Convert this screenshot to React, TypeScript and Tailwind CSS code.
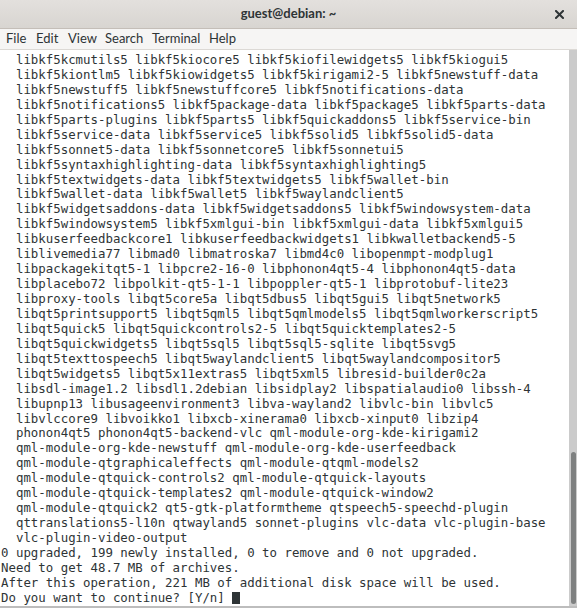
import React from "react";

const lines = [
  "  libkf5kcmutils5 libkf5kiocore5 libkf5kiofilewidgets5 libkf5kiogui5",
  "  libkf5kiontlm5 libkf5kiowidgets5 libkf5kirigami2-5 libkf5newstuff-data",
  "  libkf5newstuff5 libkf5newstuffcore5 libkf5notifications-data",
  "  libkf5notifications5 libkf5package-data libkf5package5 libkf5parts-data",
  "  libkf5parts-plugins libkf5parts5 libkf5quickaddons5 libkf5service-bin",
  "  libkf5service-data libkf5service5 libkf5solid5 libkf5solid5-data",
  "  libkf5sonnet5-data libkf5sonnetcore5 libkf5sonnetui5",
  "  libkf5syntaxhighlighting-data libkf5syntaxhighlighting5",
  "  libkf5textwidgets-data libkf5textwidgets5 libkf5wallet-bin",
  "  libkf5wallet-data libkf5wallet5 libkf5waylandclient5",
  "  libkf5widgetsaddons-data libkf5widgetsaddons5 libkf5windowsystem-data",
  "  libkf5windowsystem5 libkf5xmlgui-bin libkf5xmlgui-data libkf5xmlgui5",
  "  libkuserfeedbackcore1 libkuserfeedbackwidgets1 libkwalletbackend5-5",
  "  liblivemedia77 libmad0 libmatroska7 libmd4c0 libopenmpt-modplug1",
  "  libpackagekitqt5-1 libpcre2-16-0 libphonon4qt5-4 libphonon4qt5-data",
  "  libplacebo72 libpolkit-qt5-1-1 libpoppler-qt5-1 libprotobuf-lite23",
  "  libproxy-tools libqt5core5a libqt5dbus5 libqt5gui5 libqt5network5",
  "  libqt5printsupport5 libqt5qml5 libqt5qmlmodels5 libqt5qmlworkerscript5",
  "  libqt5quick5 libqt5quickcontrols2-5 libqt5quicktemplates2-5",
  "  libqt5quickwidgets5 libqt5sql5 libqt5sql5-sqlite libqt5svg5",
  "  libqt5texttospeech5 libqt5waylandclient5 libqt5waylandcompositor5",
  "  libqt5widgets5 libqt5x11extras5 libqt5xml5 libresid-builder0c2a",
  "  libsdl-image1.2 libsdl1.2debian libsidplay2 libspatialaudio0 libssh-4",
  "  libupnp13 libusageenvironment3 libva-wayland2 libvlc-bin libvlc5",
  "  libvlccore9 libvoikko1 libxcb-xinerama0 libxcb-xinput0 libzip4",
  "  phonon4qt5 phonon4qt5-backend-vlc qml-module-org-kde-kirigami2",
  "  qml-module-org-kde-newstuff qml-module-org-kde-userfeedback",
  "  qml-module-qtgraphicaleffects qml-module-qtqml-models2",
  "  qml-module-qtquick-controls2 qml-module-qtquick-layouts",
  "  qml-module-qtquick-templates2 qml-module-qtquick-window2",
  "  qml-module-qtquick2 qt5-gtk-platformtheme qtspeech5-speechd-plugin",
  "  qttranslations5-l10n qtwayland5 sonnet-plugins vlc-data vlc-plugin-base",
  "  vlc-plugin-video-output",
  "0 upgraded, 199 newly installed, 0 to remove and 0 not upgraded.",
  "Need to get 48.7 MB of archives.",
  "After this operation, 221 MB of additional disk space will be used.",
];

const uiFont = { fontFamily: 'Lato, "Noto Sans", "DejaVu Sans", sans-serif' };

export default function App() {
  return (
    <div className="w-[577px] h-[608px] flex flex-col overflow-hidden bg-white">
      {/* Title bar */}
      <div className="relative h-[29px] shrink-0 flex items-center justify-center bg-gradient-to-b from-[#e3e0dd] to-[#d8d5d1] border-b border-[#c4beb8]">
        <span className="text-[13px] font-bold text-[#2e3436]" style={uiFont}>
          guest@debian: ~
        </span>
        <svg
          className="absolute right-[13px] top-[10px]"
          width="9"
          height="9"
          viewBox="0 0 9 9"
        >
          <path d="M1 1 L8 8 M8 1 L1 8" stroke="#2e3436" strokeWidth="2" strokeLinecap="square" />
        </svg>
      </div>
      {/* Menu bar */}
      <div
        className="h-[21px] shrink-0 flex items-center bg-[#f6f5f4] border-b border-[#dcd9d5] text-[13px] text-[#2e3436] pl-[6px]"
        style={uiFont}
      >
        <span className="w-[30px]">File</span>
        <span className="w-[32px]">Edit</span>
        <span className="w-[37px]">View</span>
        <span className="w-[47px]">Search</span>
        <span className="w-[57px]">Terminal</span>
        <span>Help</span>
      </div>
      {/* Terminal */}
      <div className="flex-1 flex min-h-0">
        <div
          className="flex-1 pl-[1px] pt-[3px] text-[12.4px] leading-[14.94px] text-[#2e3436] whitespace-pre overflow-hidden"
          style={{ fontFamily: '"DejaVu Sans Mono", monospace' }}
        >
          {lines.map((l, i) => (
            <div key={i}>{l}</div>
          ))}
          <div>
            Do you want to continue? [Y/n]{" "}
            <span className="inline-block w-[1ch] h-[12px] align-[-2px] bg-[#2e3436]" />
          </div>
        </div>
        <div className="w-[8px] shrink-0 bg-[#cbcbcb] flex flex-col justify-end pb-[2px] items-end pr-[1px]">
          <div className="w-[5px] h-[152px] rounded-full bg-[#7e8080]" />
        </div>
      </div>
      <div className="h-[2px] shrink-0 bg-[#bdbdbd]" />
    </div>
  );
}
